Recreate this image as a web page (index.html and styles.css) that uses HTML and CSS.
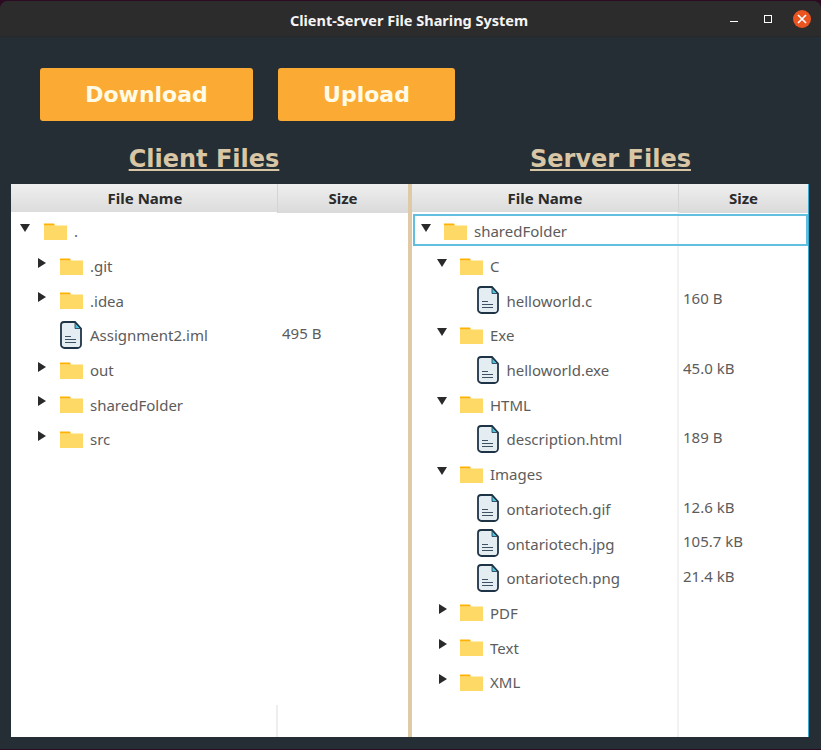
FILE: index.html
```html
<!DOCTYPE html>
<html lang="en">
<head>
    <meta charset="UTF-8">
    <meta name="viewport" content="width=device-width, initial-scale=1.0">
    <title>Client-Server File Sharing System</title>
    <link rel="stylesheet" href="styles.css">
</head>
<body>
    <svg class="defs" width="0" height="0">
        <symbol id="folder" viewBox="0 0 23 17">
            <path d="M0 2.500h23V17H0z" fill="#ffd966"/>
            <path d="M0 .5h10l1 2H0z" fill="#ffb300"/>
        </symbol>
        <symbol id="file" viewBox="0 0 22 28">
            <path d="M4 1H15l6 6.500V23.500a3.500 3.500 0 0 1-3.500 3.500H4.500A3.500 3.500 0 0 1 1 23.500V4a3 3 0 0 1 3-3z" fill="#e4edf2" stroke="#1f3346" stroke-width="1.800"/>
            <path d="M15 2v5.500h5.500z" fill="#4fc3dc" stroke="#1f3346" stroke-width=".8"/>
            <path d="M5 15.500h6M5 18.500h11M5 21.500h11" stroke="#3d5162" stroke-width="1.200" fill="none"/>
        </symbol>
    </svg>

    <div class="window">
        <header class="titlebar">
            <span class="title">Client-Server File Sharing System</span>
            <div class="controls">
                <span class="minimize"></span>
                <span class="maximize"></span>
                <span class="close">
                    <svg width="12" height="12" viewBox="0 0 12 12"><path d="M2 2l8 8M10 2l-8 8" stroke="#fff" stroke-width="1.700"/></svg>
                </span>
            </div>
        </header>

        <div class="toolbar">
            <button class="action download">Download</button>
            <button class="action upload">Upload</button>
        </div>

        <div class="headings">
            <h2 class="client-heading">Client Files</h2>
            <h2 class="server-heading">Server Files</h2>
        </div>

        <div class="panes">
            <section class="tree client">
                <div class="tree-head">
                    <div class="head-name">File Name</div>
                    <div class="head-size">Size</div>
                </div>
                <div class="tree-body">
                    <div class="row level-0"><span class="arrow open"></span><svg class="icon folder"><use href="#folder"/></svg><span class="name">.</span></div>
                    <div class="row level-1"><span class="arrow"></span><svg class="icon folder"><use href="#folder"/></svg><span class="name">.git</span></div>
                    <div class="row level-1"><span class="arrow"></span><svg class="icon folder"><use href="#folder"/></svg><span class="name">.idea</span></div>
                    <div class="row level-1"><span class="arrow none"></span><svg class="icon file"><use href="#file"/></svg><span class="name">Assignment2.iml</span><span class="size">495 B</span></div>
                    <div class="row level-1"><span class="arrow"></span><svg class="icon folder"><use href="#folder"/></svg><span class="name">out</span></div>
                    <div class="row level-1"><span class="arrow"></span><svg class="icon folder"><use href="#folder"/></svg><span class="name">sharedFolder</span></div>
                    <div class="row level-1"><span class="arrow"></span><svg class="icon folder"><use href="#folder"/></svg><span class="name">src</span></div>
                </div>
            </section>

            <section class="tree server">
                <div class="tree-head">
                    <div class="head-name">File Name</div>
                    <div class="head-size">Size</div>
                </div>
                <div class="tree-body">
                    <div class="row level-0 selected"><span class="arrow open"></span><svg class="icon folder"><use href="#folder"/></svg><span class="name">sharedFolder</span></div>
                    <div class="row level-1"><span class="arrow open"></span><svg class="icon folder"><use href="#folder"/></svg><span class="name">C</span></div>
                    <div class="row level-2"><span class="arrow none"></span><svg class="icon file"><use href="#file"/></svg><span class="name">helloworld.c</span><span class="size">160 B</span></div>
                    <div class="row level-1"><span class="arrow open"></span><svg class="icon folder"><use href="#folder"/></svg><span class="name">Exe</span></div>
                    <div class="row level-2"><span class="arrow none"></span><svg class="icon file"><use href="#file"/></svg><span class="name">helloworld.exe</span><span class="size">45.0 kB</span></div>
                    <div class="row level-1"><span class="arrow open"></span><svg class="icon folder"><use href="#folder"/></svg><span class="name">HTML</span></div>
                    <div class="row level-2"><span class="arrow none"></span><svg class="icon file"><use href="#file"/></svg><span class="name">description.html</span><span class="size">189 B</span></div>
                    <div class="row level-1"><span class="arrow open"></span><svg class="icon folder"><use href="#folder"/></svg><span class="name">Images</span></div>
                    <div class="row level-2"><span class="arrow none"></span><svg class="icon file"><use href="#file"/></svg><span class="name">ontariotech.gif</span><span class="size">12.6 kB</span></div>
                    <div class="row level-2"><span class="arrow none"></span><svg class="icon file"><use href="#file"/></svg><span class="name">ontariotech.jpg</span><span class="size">105.7 kB</span></div>
                    <div class="row level-2"><span class="arrow none"></span><svg class="icon file"><use href="#file"/></svg><span class="name">ontariotech.png</span><span class="size">21.4 kB</span></div>
                    <div class="row level-1"><span class="arrow"></span><svg class="icon folder"><use href="#folder"/></svg><span class="name">PDF</span></div>
                    <div class="row level-1"><span class="arrow"></span><svg class="icon folder"><use href="#folder"/></svg><span class="name">Text</span></div>
                    <div class="row level-1"><span class="arrow"></span><svg class="icon folder"><use href="#folder"/></svg><span class="name">XML</span></div>
                </div>
            </section>
        </div>
    </div>
</body>
</html>
```

FILE: styles.css
```css
html, body { margin: 0; height: 100%; background-color: #2c0a22; overflow: hidden; }
.defs { display: block; height: 0; }

.window {
    height: 748px;
    margin-top: 1px;
    box-sizing: border-box;
    display: flex;
    flex-direction: column;
    background-color: #252e35;
    border-radius: 8px 8px 0 0;
    overflow: hidden;
}

.titlebar {
    flex: none;
    height: 35px;
    display: flex;
    align-items: center;
    justify-content: center;
    background-color: #2d2c2c;
    border-bottom: 1px solid #272727;
}
.title { font: bold 14.500px "Noto Sans", sans-serif; color: #f4f4f4; margin-right: 3px; margin-top: 2px; }
.controls { position: absolute; top: 10px; right: 10px; display: flex; align-items: center; gap: 21px; }
.minimize { width: 8px; height: 1px; background: #fff; margin-top: 5px; margin-right: 5px; }
.maximize { width: 6px; height: 6px; border: 1px solid #fff; }
.close { width: 18px; height: 18px; border-radius: 50%; background: #e95420; display: flex; align-items: center; justify-content: center; }

.toolbar { flex: none; display: flex; gap: 25px; padding: 31px 0 0 40px; }
.action {
    height: 53px;
    padding: 0;
    border: 0;
    border-radius: 3px;
    background-color: #fbab33;
    color: #fffbe6;
    font: bold 22px "DejaVu Sans", sans-serif;
}
.download { width: 213px; }
.upload { width: 177px; }

.headings { flex: none; display: flex; height: 63px; padding-top: 12px; box-sizing: border-box; align-items: center; }
.headings h2 {
    margin: 0;
    font: bold 24px "DejaVu Sans", sans-serif;
    color: #d9c6a5;
    text-decoration: underline;
    text-align: center;
}
.client-heading { width: 408px; }
.server-heading { width: 405px; }

.panes { flex: 1; display: flex; padding: 0 12px 12px 11px; }
.tree { display: flex; flex-direction: column; background-color: #fff; }
.client { width: 397px; border-right: 4px solid #dfc9a6; }
.server { width: 396px; border-right: 1px solid #39a9cf; }

.tree-head {
    flex: none;
    height: 28px;
    display: flex;
    font: bold 15px "Noto Sans", sans-serif;
    color: #2b2b2b;
    text-align: center;
    line-height: 28px;
    background: linear-gradient(#efefef, #dcdcdc);
}
.head-name { width: 268px; box-sizing: border-box; }
.server .head-name { padding-right: 2px; }
.head-size { flex: 1; height: 29px; background: linear-gradient(#efefef, #dadada); border-left: 1px solid #d4d4d4; margin-left: -2px; }

.tree-body { flex: 1; padding-top: 2px; }
.client .tree-body { background: linear-gradient(to right, transparent 265px, #eeeeee 265px, #eeeeee 267px, transparent 267px) no-repeat bottom / 100% 32px; }
.server .tree-body { background: linear-gradient(to right, transparent 265px, #f2f2f2 265px, #f2f2f2 267px, transparent 267px); }
.row {
    height: 34.700px;
    box-sizing: border-box;
    display: flex;
    align-items: center;
    font: 15px "Noto Sans", sans-serif;
    color: #5c5c5c;
    position: relative;
}
.level-0 { padding-left: 9px; }
.level-1 { padding-left: 25px; }
.level-2 { padding-left: 41px; }

.arrow {
    width: 24px;
    display: flex;
    align-items: center;
    margin-top: -7px;
}
.server .arrow:not(.none) { width: 23px; }
.arrow::before {
    content: "";
    border-style: solid;
    border-width: 5px 0 5px 8px;
    border-color: transparent transparent transparent #2a2a2a;
    margin-left: 2px;
}
.arrow.open::before {
    border-width: 8px 5px 0 5px;
    border-color: #2a2a2a transparent transparent transparent;
    margin-left: 0;
}
.arrow.none::before { display: none; }

.icon { flex: none; }
.folder { width: 23px; height: 17px; }
.file { width: 22px; height: 28px; margin-top: -1px; margin-right: 1px; }
.name { margin-left: 7px; }
.server .file + .name { margin-left: 6.500px; }
.size { position: absolute; left: 271px; top: 5px; }

.selected { outline: 2px solid #62bfdf; outline-offset: -2px; margin: 0 0 3.200px 1px; padding: 3px 0 0 8px; height: 31.500px; }
```
